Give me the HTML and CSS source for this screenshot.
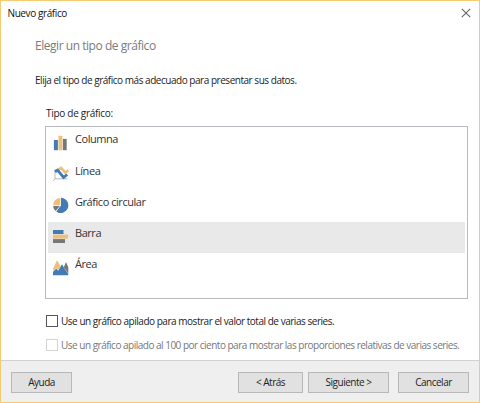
FILE: index.html
```html
<!DOCTYPE html>
<html lang="es">
<head>
<meta charset="utf-8">
<title>Nuevo gráfico</title>
<link rel="stylesheet" href="styles.css">
</head>
<body>
<main class="dialog">
  <header class="titlebar">
    <span class="title">Nuevo gráfico</span>
    <svg class="close" width="10" height="10" viewBox="0 0 10 10"><path d="M.8.8l8.4 8.4M9.2.8L.8 9.2"/></svg>
  </header>
  <section class="content">
    <h1 class="heading">Elegir un tipo de gráfico</h1>
    <p class="intro">Elija el tipo de gráfico más adecuado para presentar sus datos.</p>
    <div class="field">
      <div class="label">Tipo de gráfico:</div>
      <ul class="list">
        <li class="item first">
          <svg class="icon" width="16" height="16" viewBox="0 0 16 16"><path class="blue" d="M.9 5h4v10.2h-4z"/><path class="gold" d="M5.4.8h4v14.4h-4z"/><path class="gray" d="M9.9 3.9h3.8v11.3H9.9z"/></svg>
          <span class="name">Columna</span>
        </li>
        <li class="item">
          <svg class="icon" width="16" height="16" viewBox="0 0 16 16"><path class="axis" d="M2 3.5v9.3h12.5M2 12.8L-.2 15"/><path class="gold-line" d="M5.8 3.4L8.2 2l4 4.6 3-2.4"/><path class="blue-line" d="M2 5.8l2.6-1.6 6 7.3 3.6-3"/></svg>
          <span class="name">Línea</span>
        </li>
        <li class="item">
          <svg class="icon" width="16" height="16" viewBox="0 -.5 16 16"><path class="blue" d="M8 .3A7.6 7.6 0 1 1 3.2 14L8 8z"/><path class="gold" d="M7.3.4v7.3H0A7.6 7.6 0 0 1 7.3.4z"/><path class="gray" d="M.1 8.5h6.8L2.6 13.6A7.5 7.5 0 0 1 .1 8.5z"/></svg>
          <span class="name">Gráfico circular</span>
        </li>
        <li class="item selected">
          <svg class="icon" width="16" height="16" viewBox="0 -.8 16 16"><path class="blue" d="M0 1.2h10.5v4H0z"/><path class="gold" d="M0 5.8h15v4H0z"/><path class="gray" d="M0 10.3h12v3.9H0z"/></svg>
          <span class="name">Barra</span>
        </li>
        <li class="item">
          <svg class="icon" width="16" height="16" viewBox="0 -.8 16 16"><path class="gold" d="M4 .5l3.5 6-2.5 4-1.8-2L.6 11 0 9z"/><path class="gray" d="M13 2.3l2.3 5.2V14L10.8 7.5z"/><path class="blue" d="M0 15.5V12l3.2-3 2 2L9 4.5l3.5 6L15.2 14v1.5z"/></svg>
          <span class="name">Área</span>
        </li>
      </ul>
      <div class="check"><i class="box"></i><span class="stacked">Use un gráfico apilado para mostrar el valor total de varias series.</span></div>
      <div class="check disabled"><i class="box"></i><span class="percent">Use un gráfico apilado al 100 por ciento para mostrar las proporciones relativas de varias series.</span></div>
    </div>
  </section>
  <footer class="footer">
    <button class="btn help">Ayuda</button>
    <button class="btn back">&lt; Atrás</button>
    <button class="btn next">Siguiente &gt;</button>
    <button class="btn cancel">Cancelar</button>
  </footer>
</main>
</body>
</html>
```
FILE: styles.css
```css
* { box-sizing: border-box; margin: 0; padding: 0; }
body {
  width: 480px;
  height: 403px;
  overflow: hidden;
  font-family: "Open Sans", "Noto Sans", sans-serif;
  font-size: 10px;
  line-height: 16px;
  letter-spacing: -.47px;
  color: #222;
  background: #fff;
}
.dialog {
  display: flex;
  flex-direction: column;
  width: 480px;
  height: 403px;
  border: 1px solid #f4cb70;
  white-space: nowrap;
}
.titlebar {
  display: flex;
  justify-content: space-between;
  height: 33px;
  padding: 4px 8px 0 6.5px;
}
.title { letter-spacing: -.4px; color: #111; }
.close { margin-top: 3px; fill: none; stroke: #666; stroke-width: 1.1; }
.content { flex: 1; padding-left: 34px; }
.heading {
  height: 38px;
  font-size: 12px;
  font-weight: 400;
  line-height: 24px;
  letter-spacing: -.46px;
  color: #7b7b7b;
}
.intro { height: 33px; }
.field { padding-left: 10px; }
.label { height: 21px; padding-left: 1px; letter-spacing: -.29px; }
.list {
  width: 423px;
  height: 173px;
  padding: 2px;
  border: 1px solid #b9babf;
  list-style: none;
}
.item { display: flex; height: 31px; padding-left: 5px; }
.selected { background: #e9e9e9; }
.icon { flex: none; margin-top: 6px; overflow: visible; }
.name {
  margin: 3px 0 0 6px;
  font-size: 11px;
  letter-spacing: -.45px;
  color: #333;
}
.first .name { margin-top: 2px; }
.blue { fill: #427bb5; }
.gold { fill: #eac07b; }
.gray { fill: #777; }
.axis { fill: none; stroke: #aaa; stroke-width: .8; }
.gold-line { fill: none; stroke: #eac07b; stroke-width: 2.6; }
.blue-line { fill: none; stroke: #427bb5; stroke-width: 2.8; }
.check {
  display: flex;
  align-items: center;
  height: 24px;
  padding-left: 1px;
}
.list + .check { margin-top: 10px; }
.box { flex: none; width: 12px; height: 12px; margin-right: 3px; border: 1px solid #555; }
.percent { letter-spacing: -.5px; }
.disabled { color: #777; }
.disabled .box { border-color: #d5d5d5; }
.footer {
  display: flex;
  height: 42px;
  padding: 11px 10px 0;
  background: #efefef;
  border-top: 1px solid #d1d1d1;
}
.btn {
  height: 21px;
  font: inherit;
  line-height: 19px;
  letter-spacing: -.5px;
  color: #222;
  background: #e1e1e1;
  border: 1px solid #b8b8b8;
}
.help { width: 61px; margin-right: auto; }
.back { width: 65px; }
.next { width: 81px; margin-left: 5px; }
.cancel { width: 71px; margin-left: 9px; }
```
